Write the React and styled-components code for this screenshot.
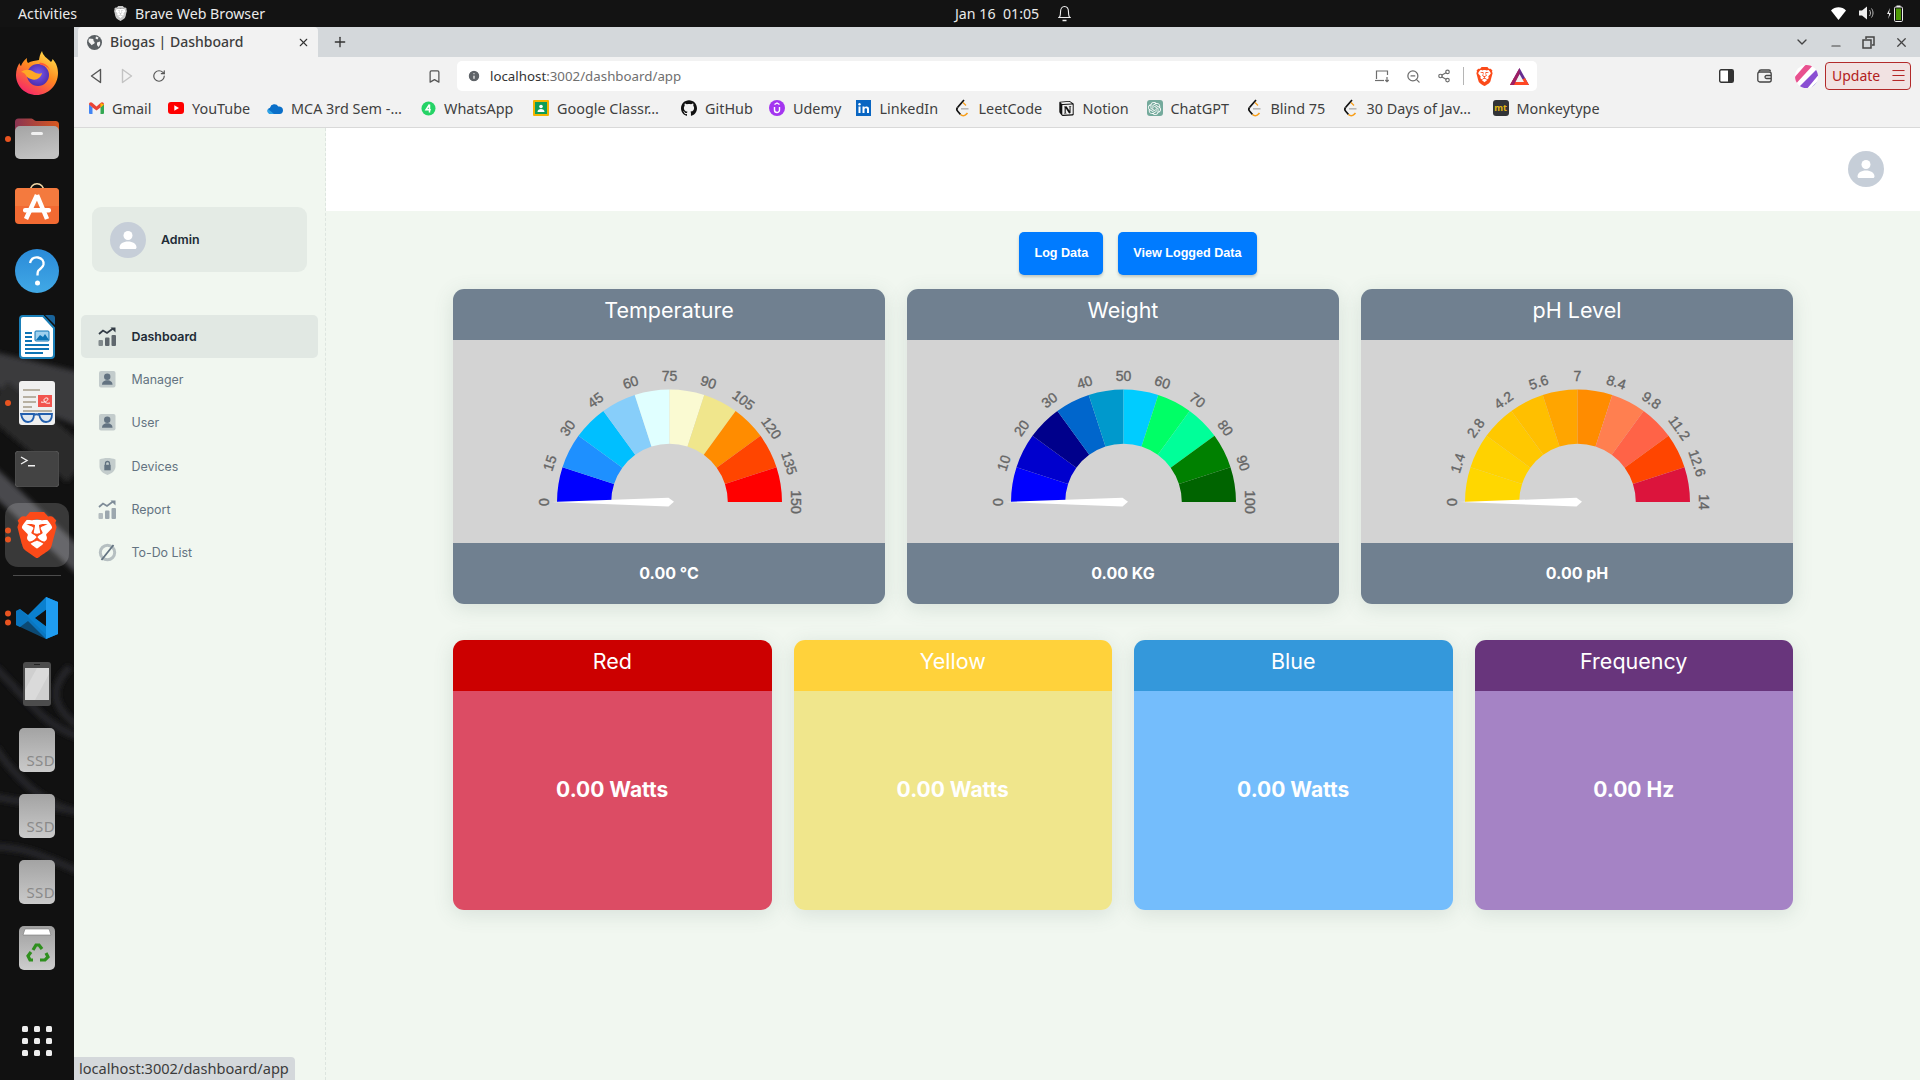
import styled, { createGlobalStyle } from "styled-components";
import { SiBrave, SiGithub, SiNotion, SiOpenai } from "react-icons/si";
import { Bookmark, Share2, ZoomOut, RotateCw, ChevronDown, Minus, X, Plus, Menu, Info } from "lucide-react";

const UI_FONT = `"Noto Sans", "Open Sans", sans-serif`;
const APP_FONT = `Inter, "Noto Sans", sans-serif`;

const GlobalStyle = createGlobalStyle`
  html, body {
    margin: 0;
    padding: 0;
    width: 1920px;
    height: 1080px;
    overflow: hidden;
    background: #111;
  }
  * { box-sizing: border-box; }
`;

const Screen = styled.div`
  width: 1920px;
  height: 1080px;
  display: flex;
  flex-direction: column;
  overflow: hidden;
  font-family: ${UI_FONT};
`;

/* ---------- GNOME top bar ---------- */
const TopBar = styled.div`
  height: 27px;
  flex: none;
  background: #131313;
  color: #eaeaea;
  font-size: 14.2px;
  display: grid;
  grid-template-columns: 937px auto 1fr;
  align-items: center;
  padding: 0 17px 1px 18px;
`;

const TopLeft = styled.div`
  display: flex;
  align-items: center;
`;

const AppName = styled.div`
  display: flex;
  align-items: center;
  gap: 7px;
  margin-left: 36px;
`;

const Clock = styled.div`
  display: flex;
  align-items: center;
  gap: 19px;
`;

const Tray = styled.div`
  display: flex;
  justify-content: flex-end;
  align-items: center;
  gap: 13px;
`;

/* ---------- Dock ---------- */
const Body = styled.div`
  flex: 1;
  display: flex;
  min-height: 0;
`;

const Dock = styled.div`
  position: relative;
  width: 74px;
  flex: none;
  background: #111;
  display: flex;
  flex-direction: column;
  align-items: center;
  padding: 24px 0 24px;
  overflow: hidden;
`;

const Wallpaper = styled.svg`
  position: absolute;
  top: 0;
  left: 0;
`;

const DockItem = styled.div`
  position: relative;
  width: 44px;
  height: 44px;
  flex: none;
  margin-bottom: ${({ $after }) => $after ?? 22}px;
  display: flex;
  align-items: center;
  justify-content: center;
`;

const ActiveTile = styled.div`
  position: absolute;
  inset: -10px;
  border-radius: 13px;
  background: rgba(255, 255, 255, 0.17);
`;

const DockDots = styled.div`
  position: absolute;
  left: -10px;
  top: 50%;
  transform: translateY(-50%);
  display: flex;
  flex-direction: column;
  gap: 3px;
`;

const DockDot = styled.span`
  width: 6px;
  height: 6px;
  border-radius: 50%;
  background: #e95420;
`;

const DockSeparator = styled.div`
  position: relative;
  width: 48px;
  height: 1px;
  flex: none;
  margin: -2px 0 20px;
  background: rgba(255, 255, 255, 0.25);
`;

const AppGrid = styled.div`
  position: relative;
  margin-top: auto;
  display: grid;
  grid-template-columns: repeat(3, 6px);
  grid-auto-rows: 6px;
  gap: 6px;
`;

const AppGridDot = styled.span`
  border-radius: 1.5px;
  background: #eee;
`;

/* ---------- Browser chrome ---------- */
const Browser = styled.div`
  flex: 1;
  min-width: 0;
  display: flex;
  flex-direction: column;
`;

const TabStrip = styled.div`
  height: 30px;
  flex: none;
  background: #d4d8db;
  display: flex;
  align-items: stretch;
  padding-left: 4px;
  color: #3c3c3c;
`;

const Tab = styled.div`
  width: 240px;
  background: #f2f2f2;
  border-radius: 4px 4px 0 0;
  display: flex;
  align-items: center;
  padding: 0 8px 0 9px;
  font-size: 14px;
  font-weight: 500;
  color: #3d3d3d;
`;

const TabTitle = styled.span`
  flex: 1;
  margin-left: 8px;
  padding-bottom: 1px;
`;

const NewTab = styled.div`
  display: flex;
  align-items: center;
  margin-left: 14px;
`;

const WindowControls = styled.div`
  margin-left: auto;
  display: flex;
  align-items: center;
  gap: 19px;
  padding-right: 11px;
  color: #444;
`;

const MinimizeIcon = styled(Minus)`
  margin-top: 7px;
`;

const Toolbar = styled.div`
  height: 37px;
  flex: none;
  background: #f2f2f2;
  display: flex;
  align-items: center;
  color: #555;
  padding-top: 1px;
`;

const NavIcons = styled.div`
  width: 353px;
  flex: none;
  display: flex;
  align-items: center;
  gap: 19px;
  padding-left: 16px;
`;

const BookmarkStar = styled(Bookmark)`
  flex: none;
  margin-right: 15px;
`;

const UrlBar = styled.div`
  width: 1080px;
  height: 30px;
  flex: none;
  background: #fff;
  border-radius: 5px;
  display: flex;
  align-items: center;
  padding: 0 8px 0 10px;
  font-size: 13.3px;
`;

const UrlHost = styled.span`
  color: #333;
  margin-left: 9px;
  padding-bottom: 1px;
`;

const UrlPath = styled.span`
  color: #6f6f6f;
  padding-bottom: 1px;
`;

const UrlActions = styled.div`
  margin-left: auto;
  display: flex;
  align-items: center;
  gap: 16px;
  color: #6d6d6d;
`;

const UrlDivider = styled.span`
  width: 1px;
  height: 18px;
  background: #b5b5b5;
  margin: 0 -5px 0 -4px;
`;

const ToolbarRight = styled.div`
  flex: 1;
  display: flex;
  align-items: center;
  padding-left: 182px;
`;

const UpdateButton = styled.div`
  width: 86px;
  height: 28px;
  margin-left: 7px;
  border: 1px solid #b22a2a;
  border-radius: 4px;
  background: #f1e2e2;
  color: #b22020;
  font-size: 14px;
  display: flex;
  align-items: center;
  justify-content: space-between;
  padding: 0 3px 1px 6px;
`;

const ToolSpacer = styled.span`
  width: 23px;
  flex: none;
`;

const BookmarksBar = styled.div`
  height: 34px;
  flex: none;
  background: #f2f2f2;
  border-bottom: 1px solid #d9d9d9;
  display: flex;
  align-items: center;
  padding: 0 0 5px 14px;
  gap: 16px;
  font-size: 14.4px;
  color: #3f3f3f;
`;

const BookmarkItem = styled.div`
  display: flex;
  align-items: center;
  gap: 8px;
`;

const BookmarkIcon = styled.div`
  width: 16px;
  height: 16px;
  flex: none;
  display: flex;
  align-items: center;
  justify-content: center;
`;

const BookmarkLabel = styled.span`
  display: block;
  width: ${({ $w }) => $w}px;
  white-space: nowrap;
`;

const MonkeyIcon = styled.div`
  width: 16px;
  height: 16px;
  border-radius: 3px;
  background: #323437;
  color: #e2b714;
  font-size: 9px;
  font-weight: 700;
  text-align: center;
  line-height: 16px;
`;

/* ---------- Dashboard page ---------- */
const Page = styled.div`
  position: relative;
  flex: 1;
  min-height: 0;
  display: flex;
  background: #f1f7f0;
  font-family: ${APP_FONT};
`;

const Sidebar = styled.aside`
  width: 252px;
  flex: none;
  border-right: 1px dashed #dde5df;
  padding: 79px 7px 0;
`;

const AccountCard = styled.div`
  height: 65px;
  margin: 0 11px 43px;
  border-radius: 9px;
  background: #e4ebe5;
  display: flex;
  align-items: center;
  padding-left: 18px;
  gap: 15px;
  font-size: 12.4px;
  font-weight: 600;
  color: #212b36;
`;

const Avatar = styled.div`
  width: ${({ $size }) => $size}px;
  height: ${({ $size }) => $size}px;
  flex: none;
  border-radius: 50%;
  background: #c6ced8;
  display: flex;
  align-items: center;
  justify-content: center;
`;

const NavList = styled.nav`
  display: flex;
  flex-direction: column;
`;

const NavItem = styled.div`
  height: 43.2px;
  width: 237px;
  border-radius: 5px;
  display: flex;
  align-items: center;
  padding-left: 17px;
  gap: 14.5px;
  font-size: 12.4px;
  font-weight: ${({ $active }) => ($active ? 600 : 400)};
  color: ${({ $active }) => ($active ? "#212b36" : "#637381")};
  background: ${({ $active }) => ($active ? "#e1e8e3" : "transparent")};
`;

const NavIconBox = styled.div`
  width: 19px;
  height: 19px;
  flex: none;
  display: flex;
`;

const Main = styled.main`
  flex: 1;
  min-width: 0;
  display: flex;
  flex-direction: column;
`;

const Header = styled.header`
  height: 83px;
  flex: none;
  background: #fff;
  display: flex;
  align-items: center;
  justify-content: flex-end;
  padding: 0 36px 1px 0;
`;

const Content = styled.div`
  width: 1340px;
  margin: 0 auto;
  padding-top: 21px;
`;

const ButtonRow = styled.div`
  display: flex;
  justify-content: center;
  gap: 15px;
  padding-left: 30px;
  margin-bottom: 14px;
`;

const ActionButton = styled.button`
  height: 43px;
  padding: 0 15px 2px;
  border: 0;
  border-radius: 5px;
  background: #007bff;
  color: #fff;
  font-family: "Liberation Sans", Arial, sans-serif;
  font-size: 12.6px;
  font-weight: 700;
  box-shadow: 0 2px 3px rgba(60, 80, 80, 0.28);
`;

const GaugeRow = styled.div`
  display: grid;
  grid-template-columns: repeat(3, 1fr);
  gap: 22px;
  margin-bottom: 36px;
`;

const Card = styled.section`
  border-radius: 11px;
  overflow: hidden;
  box-shadow: 0 4px 20px rgba(80, 110, 100, 0.16);
`;

const CardTitle = styled.div`
  height: 51px;
  padding-top: 6px;
  text-align: center;
  color: #fff;
  font-size: 21.5px;
  line-height: 30px;
  background: ${({ $color }) => $color};
`;

const GaugeBody = styled.div`
  height: 203px;
  background: #d3d3d3;
  display: flex;
  justify-content: center;
`;

const GaugeValue = styled.div`
  height: 61px;
  padding-bottom: 2px;
  background: #708090;
  color: #fff;
  font-size: 16px;
  font-weight: 700;
  display: flex;
  align-items: center;
  justify-content: center;
`;

const ReadingRow = styled.div`
  display: grid;
  grid-template-columns: repeat(4, 1fr);
  gap: 22px;
`;

const ReadingBody = styled.div`
  height: 219px;
  padding-bottom: 22px;
  background: ${({ $color }) => $color};
  color: #fff;
  font-size: 21px;
  font-weight: 700;
  display: flex;
  align-items: center;
  justify-content: center;
`;

const StatusPill = styled.div`
  position: absolute;
  left: 0;
  bottom: 0;
  height: 23px;
  padding: 0 6px 0 5px;
  border-radius: 0 4px 0 0;
  background: #d4d8db;
  color: #3c3c3c;
  font-family: ${UI_FONT};
  font-size: 14.6px;
  line-height: 22px;
`;

/* ---------- Gauge drawing ---------- */
const GaugeText = styled.text`
  font-family: "Liberation Sans", Arial, sans-serif;
  font-size: 14px;
  font-weight: 400;
  fill: #666;
  stroke: #666;
  stroke-width: 0.35px;
`;

const CX = 150.5;
const CY = 162;
const OUTER = 112.5;
const INNER = 58.3;
const LABEL_R = 126;

const polar = (radius, angle) => [CX - radius * Math.cos(angle), CY - radius * Math.sin(angle)];

const segmentPath = (i) => {
  const a0 = (Math.PI * i) / 10;
  const a1 = (Math.PI * (i + 1)) / 10;
  const [x0, y0] = polar(OUTER, a0);
  const [x1, y1] = polar(OUTER, a1);
  const [x2, y2] = polar(INNER, a1);
  const [x3, y3] = polar(INNER, a0);
  return `M${x0} ${y0}A${OUTER} ${OUTER} 0 0 1 ${x1} ${y1}L${x2} ${y2}A${INNER} ${INNER} 0 0 0 ${x3} ${y3}Z`;
};

const Gauge = ({ colors, labels }) => (
  <svg width="300" height="203" viewBox="0 0 300 203">
    {colors.map((color, i) => (
      <path key={color + i} d={segmentPath(i)} fill={color} />
    ))}
    {labels.map((label, i) => {
      const [x, y] = polar(LABEL_R, (Math.PI * i) / 10);
      return (
        <GaugeText
          key={label}
          x={x}
          y={y}
          textAnchor="middle"
          dominantBaseline="central"
          transform={`rotate(${-90 + 18 * i} ${x} ${y})`}
        >
          {label}
        </GaugeText>
      );
    })}
    <polygon
      points={`${CX - 118} ${CY} ${CX - 1} ${CY - 4.3} ${CX + 4.5} ${CY - 0.3} ${CX - 1} ${CY + 4.5}`}
      fill="#fff"
    />
  </svg>
);

/* ---------- Icons ---------- */
const Person = ({ size }) => (
  <svg width={size} height={size} viewBox="0 0 24 24" fill="#fff">
    <circle cx="12" cy="7.5" r="4.5" />
    <path d="M3.5 19.5c0-3.8 3.8-6 8.5-6s8.5 2.2 8.5 6c0 .8-.6 1.5-1.5 1.5H5c-.9 0-1.5-.7-1.5-1.5z" />
  </svg>
);

const ChartIcon = ({ color }) => (
  <svg width="19" height="19" viewBox="0 0 19 19" fill={color}>
    <rect x="0.5" y="13" width="4.5" height="6" rx="1" opacity=".55" />
    <rect x="7" y="10.5" width="4.5" height="8.5" rx="1" opacity=".75" />
    <rect x="13.5" y="8" width="4.5" height="11" rx="1" opacity=".75" />
    <path d="M1 7l4-3.5 4 2.5 6-4.5" fill="none" stroke={color} strokeWidth="1.8" />
    <path d="M12.5 .6h5v5z" />
  </svg>
);

const PersonTile = () => (
  <svg width="19" height="19" viewBox="0 0 19 19">
    <rect x="1" y="1" width="16.5" height="16.5" rx="2" fill="#637381" opacity=".32" />
    <circle cx="9.25" cy="6.8" r="3.2" fill="#637381" />
    <path d="M4 14.8c0-3 2.2-4.6 5.25-4.6s5.25 1.6 5.25 4.6z" fill="#637381" />
  </svg>
);

const ShieldIcon = () => (
  <svg width="19" height="19" viewBox="0 0 19 19">
    <path d="M1.5 2.5c2.5-1 5-1.5 8-1.5s5.5.5 8 1.5v7c0 4-3.5 7-8 8.5-4.5-1.5-8-4.5-8-8.5z" fill="#637381" opacity=".32" />
    <path d="M6.3 7.8h6.4v5.5H6.3z" fill="#637381" />
    <path d="M7.5 8V6.5a2 2 0 0 1 4 0V8" fill="none" stroke="#637381" strokeWidth="1.3" />
  </svg>
);

const BanIcon = () => (
  <svg width="19" height="19" viewBox="0 0 19 19" fill="none">
    <circle cx="9.5" cy="9.5" r="7.2" stroke="#637381" strokeWidth="3" opacity=".42" />
    <path d="M15.5 2 3.5 17" stroke="#637381" strokeWidth="1.8" />
  </svg>
);

const Firefox = () => (
  <svg width="44" height="44" viewBox="0 0 44 44">
    <defs>
      <linearGradient id="ffA" x1="0.8" y1="0" x2="0.2" y2="1">
        <stop offset="0" stopColor="#ffe14d" />
        <stop offset=".45" stopColor="#ff8a1f" />
        <stop offset="1" stopColor="#f6206f" />
      </linearGradient>
      <radialGradient id="ffB" cx=".5" cy=".45" r=".6">
        <stop offset="0" stopColor="#7c5af0" />
        <stop offset="1" stopColor="#4a2aa8" />
      </radialGradient>
    </defs>
    <path d="M27 0c1 5 5 7 9 11 1-1 1.5-2 1.5-3 4 4 5.5 9 5.5 14 0 12-9.5 22-21.5 22C10 44 1 35 1 24c0-5 1.5-9 3.5-12 .2 1.5.8 2.5 1.5 3 1-3 3-6 6-8-.5 2 0 4 1 5 3-2 8-2.5 11-3 .5-3 1-6 3-9z" fill="url(#ffA)" />
    <circle cx="23" cy="24" r="11" fill="url(#ffB)" />
    <path d="M6 21c4-3 9-3 13 0 3 2 6 2 8 1-1 5-6 8-11 6-4-1-5-4-6-5-1-1-2-2-4-2z" fill="#ffa726" />
    <path d="M24 12c5-1 10 3 11 8-1-3-5-6-9-6z" fill="#ff5a3a" />
  </svg>
);

const FilesIcon = () => (
  <svg width="44" height="44" viewBox="0 0 44 44">
    <defs>
      <linearGradient id="fileTop" x1="0" y1="0" x2="1" y2="0">
        <stop offset="0" stopColor="#8a3452" />
        <stop offset="1" stopColor="#d9591f" />
      </linearGradient>
      <linearGradient id="fileBody" x1="0" y1="0" x2="0.3" y2="1">
        <stop offset="0" stopColor="#a4a4a4" />
        <stop offset="1" stopColor="#c2c2c2" />
      </linearGradient>
    </defs>
    <path d="M0 5a3.5 3.5 0 0 1 3.5-3.5h13c2 0 2.5 2.5 4.5 2.5h19.5A3.5 3.5 0 0 1 44 7.5V20H0z" fill="url(#fileTop)" />
    <rect y="9" width="44" height="33" rx="5" fill="url(#fileBody)" />
    <rect x="16" y="15" width="12" height="3" rx="1.5" fill="#f1f1f1" />
  </svg>
);

const StoreIcon = () => (
  <svg width="44" height="44" viewBox="0 0 44 44">
    <path d="M15 9c0-11 14-11 14 0" fill="none" stroke="#f3d9a8" strokeWidth="1.5" />
    <rect y="5" width="44" height="36" rx="4" fill="#f26a32" />
    <path d="M0 23V9a4 4 0 0 1 4-4h36a4 4 0 0 1 4 4v14z" fill="#f47a3e" />
    <path d="M22 12 11 36M22 12l10 24" fill="none" stroke="#fff" strokeWidth="4.5" />
    <rect x="8" y="25" width="28" height="4.5" rx="2" fill="#fff" />
  </svg>
);

const HelpIcon = () => (
  <svg width="44" height="44" viewBox="0 0 44 44">
    <defs>
      <linearGradient id="help" x1="0" y1="0" x2="0" y2="1">
        <stop offset="0" stopColor="#2a8ad8" />
        <stop offset="1" stopColor="#41a9e6" />
      </linearGradient>
    </defs>
    <circle cx="22" cy="22" r="22" fill="url(#help)" />
    <path d="M15 14c1-4 4-6 8-5.5 4 .5 6 3.5 5.5 7-.5 3-3 4-5 6-1 1-1 2.5-1 5" fill="none" stroke="#fff" strokeWidth="2.3" />
    <circle cx="22.5" cy="34" r="2.5" fill="#fff" />
  </svg>
);

const WriterIcon = () => (
  <svg width="36" height="44" viewBox="0 0 36 44">
    <path d="M4 1h20l11 12v27a3 3 0 0 1-3 3H4a3 3 0 0 1-3-3V4a3 3 0 0 1 3-3z" fill="#fff" stroke="#1a7fb8" strokeWidth="2" />
    <path d="M26 0h7a3 3 0 0 1 3 3v7z" fill="#19639a" />
    <path d="M6 17h7v2H6zM6 21h7v2H6zM6 25h7v2H6zM6 29h24v2H6zM6 33h24v2H6zM6 37h18v2H6z" fill="#0e74b5" />
    <rect x="16" y="16" width="14" height="10" rx="1" fill="#9ed0ee" stroke="#0e74b5" />
    <path d="M17 25l4-5 3 2 2-3 4 6z" fill="#0e74b5" />
  </svg>
);

const ReaderIcon = () => (
  <svg width="36" height="44" viewBox="0 0 36 44">
    <rect width="36" height="44" rx="3" fill="#f0f0f0" />
    <path d="M4 8h17v2H4zM4 15h13v2H4zM4 20h13v2H4zM4 25h9v2H4zM4 29h29v2H4z" fill="#b7b0a2" />
    <rect x="19" y="14" width="14" height="12" fill="#f2544f" />
    <path d="M22 21c3 1 7-1 7-3s-4-1-4 1 2 4 6 3" fill="none" stroke="#fff" strokeWidth="1" />
    <g fill="#dfe7ef" stroke="#235fae" strokeWidth="1.8">
      <path d="M2 33h13c0 5-2 8-6 8s-6-3-7-8zM20 33h13c0 5-2 8-6 8s-6-3-7-8z" />
    </g>
    <path d="M15 34c1-1 4-1 5 0" fill="none" stroke="#235fae" strokeWidth="1.8" />
  </svg>
);

const TerminalIcon = () => (
  <svg width="44" height="36" viewBox="0 0 44 36">
    <rect width="44" height="36" rx="4" fill="#434343" stroke="#555" />
    <path d="M6 6l6 3.5-6 3.5" fill="none" stroke="#f2f2f2" strokeWidth="1.4" />
    <rect x="13" y="14" width="7" height="1.5" fill="#f2f2f2" />
  </svg>
);

const BraveBack = ({ size }) => (
  <svg width={size} height={size} viewBox="0 0 24 24">
    <path d="M5 4h14l2 5-2 9-7 5-7-5-2-9z" fill="#fff" />
  </svg>
);

const BraveLogo = styled.div`
  position: relative;
  width: ${({ $size }) => $size}px;
  height: ${({ $size }) => $size}px;
  flex: none;
  color: ${({ $color }) => $color};
  & > svg { position: absolute; inset: 0; }
`;

const Brave = ({ size, color = "#fb4a19" }) => (
  <BraveLogo $size={size} $color={color}>
    <BraveBack size={size} />
    <SiBrave size={size} />
  </BraveLogo>
);

const VSCode = () => (
  <svg width="44" height="44" viewBox="0 0 44 44">
    <path d="M31 1 13 19 5 13 1 15v14l4 2 8-6 18 18 12-5V6zM32 13v18L20 22z" fill="#0a80cf" fillRule="evenodd" />
    <path d="M31 1 43 6v32l-12 5z" fill="#1f9cf0" />
    <path d="M1 15l4-2 26 26v4L1 29z" fill="#0a6fb5" opacity=".6" />
  </svg>
);

const TabletIcon = () => (
  <svg width="28" height="44" viewBox="0 0 28 44">
    <rect width="28" height="44" rx="3" fill="#4c4c4c" />
    <rect x="2" y="6" width="24" height="32" fill="#cfcfcf" />
    <path d="M2 38V28L14 6h12v6L12 38z" fill="#dadada" />
    <rect x="11" y="2" width="6" height="1" fill="#222" />
  </svg>
);

const SsdTile = styled.div`
  width: 36px;
  height: 44px;
  border-radius: 5px;
  background: linear-gradient(#a3a3a3, #cacaca);
  color: #8a8a8a;
  font-family: "Noto Sans", sans-serif;
  font-size: 15px;
  line-height: 18px;
  letter-spacing: 0.4px;
  display: flex;
  align-items: flex-end;
  justify-content: flex-end;
  padding: 0 0 3px;
`;

const TrashIcon = () => (
  <svg width="36" height="44" viewBox="0 0 36 44">
    <defs>
      <linearGradient id="trash" x1="0" y1="0" x2="0" y2="1">
        <stop offset="0" stopColor="#9f9f9f" />
        <stop offset="1" stopColor="#cdcdcd" />
      </linearGradient>
    </defs>
    <rect width="36" height="44" rx="5" fill="url(#trash)" />
    <path d="M4 9l2-6h24l2 6z" fill="#fff" stroke="#777" strokeWidth=".6" />
    <g fill="none" stroke="#2f8f1e" strokeWidth="3.2">
      <path d="M14 24l3-5h3l3 4" />
      <path d="M27 27l2 4-3 3h-5" />
      <path d="M14 34h-3l-2-4 3-4" />
    </g>
  </svg>
);

const Gmail = () => (
  <svg width="15" height="12" viewBox="0 0 15 12" fill="none">
    <path d="M0 2v9a1 1 0 0 0 1 1h2.5V5.5z" fill="#4285f4" />
    <path d="M15 2v9a1 1 0 0 1-1 1h-2.5V5.5z" fill="#34a853" />
    <path d="M0 2.5C0 .5 2-.5 3.5 1l4 3.5 4-3.5C13-.5 15 .5 15 2.5l-3.5 3-4 3-4-3z" fill="#ea4335" />
    <path d="M11.5 1 15 2.5l-3.5 3z" fill="#fbbc04" />
  </svg>
);

const YouTube = () => (
  <svg width="16" height="12" viewBox="0 0 16 12">
    <rect width="16" height="12" rx="3" fill="#f00" />
    <path d="M6.3 3.3 11 6 6.3 8.7z" fill="#fff" />
  </svg>
);

const OneDrive = () => (
  <svg width="16" height="11" viewBox="0 0 16 11">
    <path d="M3.5 11A3.2 3.2 0 0 1 3 4.7 4.5 4.5 0 0 1 11.3 3.5 3.8 3.8 0 0 1 16 7.2 3.8 3.8 0 0 1 12.5 11z" fill="#0a6fc9" />
    <path d="M3.5 11A3.2 3.2 0 0 1 1 6l6 5z" fill="#2ea3e6" />
  </svg>
);

const WhatsApp = () => (
  <svg width="15" height="15" viewBox="0 0 15 15">
    <circle cx="7.5" cy="7.5" r="7" fill="#25d366" />
    <path d="M8.5 3.5 5 8.8h4.8M8.5 3.5v8" fill="none" stroke="#fff" strokeWidth="1.5" />
  </svg>
);

const Classroom = () => (
  <svg width="16" height="16" viewBox="0 0 16 16">
    <rect width="16" height="16" rx="1" fill="#f4b400" />
    <rect x="2" y="2" width="12" height="12" fill="#0f9d58" />
    <circle cx="8" cy="6.5" r="1.8" fill="#fff" />
    <path d="M4.5 12c0-2 1.5-3 3.5-3s3.5 1 3.5 3z" fill="#fff" />
  </svg>
);

const Udemy = () => (
  <svg width="16" height="16" viewBox="0 0 16 16">
    <circle cx="8" cy="8" r="8" fill="#a435f0" />
    <path d="M5.5 7v3a2.5 2.5 0 0 0 5 0V7M5.5 4.5 8 3l2.5 1.5" fill="none" stroke="#fff" strokeWidth="1.4" />
  </svg>
);

const LinkedIn = () => (
  <svg width="15" height="16" viewBox="0 0 15 16">
    <rect width="15" height="16" fill="#0a66c2" />
    <rect x="2.5" y="6.5" width="2" height="6.5" fill="#fff" />
    <circle cx="3.5" cy="4.3" r="1.2" fill="#fff" />
    <path d="M6.5 6.5h2v1c1-1.5 4.5-1.7 4.5 1.3V13h-2V9.3c0-1.5-2.5-1.5-2.5.2V13h-2z" fill="#fff" />
  </svg>
);

const LeetCode = () => (
  <svg width="15" height="18" viewBox="0 0 15 18" fill="none">
    <path d="M9 1 2.5 8.5" stroke="#111" strokeWidth="1.7" />
    <path d="M2.5 8.5c-1 1.5-1 2.5 0 3.5l3 3.5" stroke="#111" strokeWidth="1.7" />
    <path d="M5.5 15.5c1.500 1.500 4 1.500 5.500 0l1.500-1.500" stroke="#f89f1b" strokeWidth="1.7" />
    <path d="M6 9.8h7.5" stroke="#b3b3b3" strokeWidth="1.5" />
    <path d="M8 3.5l3 3" stroke="#f89f1b" strokeWidth="1.3" />
  </svg>
);

const ChatGpt = styled.div`
  width: 16px;
  height: 16px;
  border-radius: 3px;
  background: #74aa9c;
  color: #fff;
  display: flex;
  align-items: center;
  justify-content: center;
`;

const BackIcon = ({ color = "#555", flip }) => (
  <svg width="12" height="16" viewBox="0 0 12 16" fill="none" transform={flip ? "scale(-1 1)" : undefined}>
    <path d="M10.5 1.5v13L1.5 8z" stroke={color} strokeWidth="1.4" strokeLinejoin="round" />
  </svg>
);

const GlobeSvg = styled.svg`
  flex: none;
`;

const GlobeIcon = () => (
  <GlobeSvg width="15" height="15" viewBox="0 0 15 15">
    <circle cx="7.5" cy="7.5" r="7.5" fill="#5a5f63" />
    <path d="M3 3.5c1 .5 2 0 3 .5s0 2 1 2.500 1 2-.5 2.500-1.500 2-2.500.5S1.500 7.500 1.500 6 2 3.500 3 3.500zM9 1.500l2.500 1-1 2-2-1zM10 7.500l3-1c.5 2 0 4-1.500 5.500l-1.500-2z" fill="#f2f2f2" />
  </GlobeSvg>
);

const CastIcon = () => (
  <svg width="15" height="14" viewBox="0 0 15 14" fill="none" stroke="#6d6d6d" strokeWidth="1.2">
    <path d="M1.5 10V2h11v4" />
    <path d="M0 11.5h9" />
    <path d="M12 8v4.5M10.3 11l1.7 1.700 1.700-1.700" />
  </svg>
);

const BatIcon = () => (
  <svg width="19" height="17" viewBox="0 0 19 17">
    <path d="M9.5 0 19 17H0z" fill="#662d91" />
    <path d="M0 17 4 10l5.5 3 5.500-3 4 7z" fill="#ff4724" />
    <path d="M9.5 6 14 14H5z" fill="#f2f2f2" />
    <path d="M9.5 0 0 17h4L9.5 6z" fill="#9e1f63" />
  </svg>
);

const SidePanelIcon = () => (
  <svg width="15" height="14" viewBox="0 0 15 14">
    <rect x=".7" y=".7" width="13.6" height="12.6" rx="1.5" fill="#fff" stroke="#333" strokeWidth="1.4" />
    <rect x="9" y="1" width="5" height="12" fill="#333" />
  </svg>
);

const WalletIcon = () => (
  <svg width="15" height="14" viewBox="0 0 15 14" fill="none" stroke="#444" strokeWidth="1.3">
    <path d="M2 3V2.5C2 1.5 3 1 4 1h8c1 0 1.5.5 1.5 1.5" />
    <rect x=".8" y="3" width="13.4" height="10" rx="2" />
    <path d="M14 6.5H9.5a1.5 1.5 0 0 0 0 3H14" />
  </svg>
);

const RewardsBall = () => (
  <svg width="23" height="27" viewBox="0 0 23 27">
    <defs>
      <clipPath id="ball">
        <circle cx="11.5" cy="13.5" r="11.5" />
      </clipPath>
    </defs>
    <g clipPath="url(#ball)">
      <rect width="23" height="27" fill="#fff" />
      <path d="M-3 17 13-1h8L-3 25z" fill="#e8518f" />
      <path d="M1 27 25 3v7L11 27z" fill="#8a4fd3" />
      <path d="M14 27l11-11v11z" fill="#6d5fd8" />
    </g>
  </svg>
);

const Bell = () => (
  <svg width="13" height="17" viewBox="0 0 13 17" fill="none" stroke="#eee" strokeWidth="1.1">
    <path d="M1 12.5c1.5-1 1.5-3 1.5-5.5 0-3 1.5-5.500 4-5.500s4 2.500 4 5.500c0 2.500 0 4.500 1.500 5.500z" />
    <path d="M4.5 15.5h4" strokeWidth="1.5" />
  </svg>
);

const Wifi = () => (
  <svg width="15" height="13" viewBox="0 0 15 13">
    <path d="M0 3.5C4-.8 11-.8 15 3.5L7.5 13z" fill="#fff" />
  </svg>
);

const Speaker = () => (
  <svg width="15" height="14" viewBox="0 0 15 14" fill="none">
    <path d="M0 4.5h3L8 .5v13l-5-4H0z" fill="#eee" />
    <path d="M10.5 4c1.300 1.800 1.300 4.200 0 6M12.500 2.500c2 2.800 2 6.200 0 9" stroke="#bbb" strokeWidth="1" />
  </svg>
);

const Battery = () => (
  <svg width="16" height="17" viewBox="0 0 16 17">
    <path d="M3 3 0 9h2v1l-1 4 3-6H2z" fill="#eee" />
    <rect x="7.5" y="2" width="8" height="14.5" rx="1.2" fill="none" stroke="#eee" />
    <rect x="9.5" y="0.5" width="4" height="1.5" fill="#eee" />
    <rect x="9" y="3.5" width="5" height="11.5" fill="#4e9a06" />
  </svg>
);

const WallpaperArt = () => (
  <Wallpaper width="74" height="1053" viewBox="0 0 74 1053">
    <defs>
      <filter id="soft">
        <feGaussianBlur stdDeviation="2.5" />
      </filter>
    </defs>
    <g filter="url(#soft)">
      <path d="M-5 325 80 345v55L30 380-5 360z" fill="#3a3a3c" />
      <path d="M-5 440 80 520v30L-5 470z" fill="#4a4a4e" />
      <path d="M-5 370 80 440" stroke="#2a2a2c" strokeWidth="40" />
      <g fill="none" stroke="#272729" strokeWidth="7">
        <path d="M70 640c-20 20-20 40 10 60" />
        <path d="M-5 640c30 30 50 60 85 70" />
        <path d="M-5 720c20 30 50 60 85 65" />
        <path d="M-5 770 80 785" />
        <path d="M-5 820c30 0 50 10 85 25" />
      </g>
    </g>
  </Wallpaper>
);

/* ---------- Data ---------- */
const GAUGES = [
  {
    title: "Temperature",
    value: "0.00 °C",
    colors: ["#0000ff", "#1e90ff", "#00bfff", "#87cefa", "#e0ffff", "#fafad2", "#f0e68c", "#ff8c00", "#ff4500", "#ff0000"],
    labels: ["0", "15", "30", "45", "60", "75", "90", "105", "120", "135", "150"],
  },
  {
    title: "Weight",
    value: "0.00 KG",
    colors: ["#0000ff", "#0000cd", "#00008b", "#0066cc", "#0099cc", "#00ccff", "#00ff66", "#00ff99", "#008000", "#006400"],
    labels: ["0", "10", "20", "30", "40", "50", "60", "70", "80", "90", "100"],
  },
  {
    title: "pH Level",
    value: "0.00 pH",
    colors: ["#ffd700", "#ffd200", "#ffc800", "#ffbf00", "#ffa500", "#ff8c00", "#ff7f50", "#ff6347", "#ff4500", "#dc143c"],
    labels: ["0", "1.4", "2.8", "4.2", "5.6", "7", "8.4", "9.8", "11.2", "12.6", "14"],
  },
];

const READINGS = [
  { title: "Red", value: "0.00 Watts", head: "#cc0000", body: "#dc4c64" },
  { title: "Yellow", value: "0.00 Watts", head: "#ffd23b", body: "#f0e68c" },
  { title: "Blue", value: "0.00 Watts", head: "#3498db", body: "#74bdfc" },
  { title: "Frequency", value: "0.00 Hz", head: "#68357c", body: "#a583c5" },
];

const NAV = [
  { label: "Dashboard", icon: <ChartIcon color="#333c46" />, active: true },
  { label: "Manager", icon: <PersonTile /> },
  { label: "User", icon: <PersonTile /> },
  { label: "Devices", icon: <ShieldIcon /> },
  { label: "Report", icon: <ChartIcon color="#7f8c98" /> },
  { label: "To-Do List", icon: <BanIcon /> },
];

const BOOKMARKS = [
  { label: "Gmail", w: 40, icon: <Gmail /> },
  { label: "YouTube", w: 59, icon: <YouTube /> },
  { label: "MCA 3rd Sem -…", w: 113, icon: <OneDrive /> },
  { label: "WhatsApp", w: 73, icon: <WhatsApp /> },
  { label: "Google Classr…", w: 108, icon: <Classroom /> },
  { label: "GitHub", w: 48, icon: <SiGithub size={16} color="#111" /> },
  { label: "Udemy", w: 46.5, icon: <Udemy /> },
  { label: "LinkedIn", w: 59, icon: <LinkedIn /> },
  { label: "LeetCode", w: 64, icon: <LeetCode /> },
  { label: "Notion", w: 48, icon: <SiNotion size={15} color="#111" /> },
  { label: "ChatGPT", w: 60, icon: <ChatGpt><SiOpenai size={13} /></ChatGpt> },
  { label: "Blind 75", w: 56, icon: <LeetCode /> },
  { label: "30 Days of Jav…", w: 110, icon: <LeetCode /> },
  { label: "Monkeytype", w: 84, icon: <MonkeyIcon>mt</MonkeyIcon> },
];

const Dots = ({ count }) => (
  <DockDots>
    {Array.from({ length: count }, (_, i) => (
      <DockDot key={i} />
    ))}
  </DockDots>
);

export default function App() {
  return (
    <Screen>
      <GlobalStyle />
      <TopBar>
        <TopLeft>
          Activities
          <AppName>
            <Brave size={15} color="#c9c9c9" />
            Brave Web Browser
          </AppName>
        </TopLeft>
        <Clock>
          {"Jan 16\u00a0\u00a001:05"}
          <Bell />
        </Clock>
        <Tray>
          <Wifi />
          <Speaker />
          <Battery />
        </Tray>
      </TopBar>
      <Body>
        <Dock>
          <WallpaperArt />
          <DockItem><Firefox /></DockItem>
          <DockItem><Dots count={1} /><FilesIcon /></DockItem>
          <DockItem><StoreIcon /></DockItem>
          <DockItem><HelpIcon /></DockItem>
          <DockItem><WriterIcon /></DockItem>
          <DockItem><Dots count={1} /><ReaderIcon /></DockItem>
          <DockItem><TerminalIcon /></DockItem>
          <DockItem $after={20}>
            <ActiveTile />
            <Dots count={2} />
            <Brave size={46} />
          </DockItem>
          <DockSeparator />
          <DockItem><Dots count={2} /><VSCode /></DockItem>
          <DockItem><TabletIcon /></DockItem>
          <DockItem><SsdTile>SSD</SsdTile></DockItem>
          <DockItem><SsdTile>SSD</SsdTile></DockItem>
          <DockItem><SsdTile>SSD</SsdTile></DockItem>
          <DockItem><TrashIcon /></DockItem>
          <AppGrid>
            {Array.from({ length: 9 }, (_, i) => (
              <AppGridDot key={i} />
            ))}
          </AppGrid>
        </Dock>
        <Browser>
          <TabStrip>
            <Tab>
              <GlobeIcon />
              <TabTitle>Biogas | Dashboard</TabTitle>
              <X size={13} color="#333" />
            </Tab>
            <NewTab><Plus size={16} color="#333" /></NewTab>
            <WindowControls>
              <ChevronDown size={16} />
              <MinimizeIcon size={14} />
              <svg width="13" height="13" viewBox="0 0 13 13" fill="none" stroke="#444" strokeWidth="1.5">
                <rect x="1" y="4" width="8" height="8" />
                <path d="M4 3V1h8v8h-2" />
              </svg>
              <X size={15} />
            </WindowControls>
          </TabStrip>
          <Toolbar>
            <NavIcons>
              <BackIcon />
              <BackIcon color="#c3c3c3" flip />
              <RotateCw size={14} />
            </NavIcons>
            <BookmarkStar size={15} color="#555" />
            <UrlBar>
              <Info size={14} color="#fff" fill="#5f6368" />
              <UrlHost>localhost</UrlHost>
              <UrlPath>:3002/dashboard/app</UrlPath>
              <UrlActions>
                <CastIcon />
                <ZoomOut size={15} />
                <Share2 size={14} />
                <UrlDivider />
                <Brave size={19} />
                <BatIcon />
              </UrlActions>
            </UrlBar>
            <ToolbarRight>
              <SidePanelIcon />
              <ToolSpacer />
              <WalletIcon />
              <ToolSpacer />
              <RewardsBall />
              <UpdateButton>
                Update
                <Menu size={17} strokeWidth={1.4} />
              </UpdateButton>
            </ToolbarRight>
          </Toolbar>
          <BookmarksBar>
            {BOOKMARKS.map((item) => (
              <BookmarkItem key={item.label}>
                <BookmarkIcon>{item.icon}</BookmarkIcon>
                <BookmarkLabel $w={item.w}>{item.label}</BookmarkLabel>
              </BookmarkItem>
            ))}
          </BookmarksBar>
          <Page>
            <Sidebar>
              <AccountCard>
                <Avatar $size={36}><Person size={24} /></Avatar>
                Admin
              </AccountCard>
              <NavList>
                {NAV.map((item) => (
                  <NavItem key={item.label} $active={item.active}>
                    <NavIconBox>{item.icon}</NavIconBox>
                    {item.label}
                  </NavItem>
                ))}
              </NavList>
            </Sidebar>
            <Main>
              <Header>
                <Avatar $size={36}><Person size={24} /></Avatar>
              </Header>
              <Content>
                <ButtonRow>
                  <ActionButton>Log Data</ActionButton>
                  <ActionButton>View Logged Data</ActionButton>
                </ButtonRow>
                <GaugeRow>
                  {GAUGES.map((gauge) => (
                    <Card key={gauge.title}>
                      <CardTitle $color="#708090">{gauge.title}</CardTitle>
                      <GaugeBody>
                        <Gauge colors={gauge.colors} labels={gauge.labels} />
                      </GaugeBody>
                      <GaugeValue>{gauge.value}</GaugeValue>
                    </Card>
                  ))}
                </GaugeRow>
                <ReadingRow>
                  {READINGS.map((reading) => (
                    <Card key={reading.title}>
                      <CardTitle $color={reading.head}>{reading.title}</CardTitle>
                      <ReadingBody $color={reading.body}>{reading.value}</ReadingBody>
                    </Card>
                  ))}
                </ReadingRow>
              </Content>
            </Main>
            <StatusPill>localhost:3002/dashboard/app</StatusPill>
          </Page>
        </Browser>
      </Body>
    </Screen>
  );
}
